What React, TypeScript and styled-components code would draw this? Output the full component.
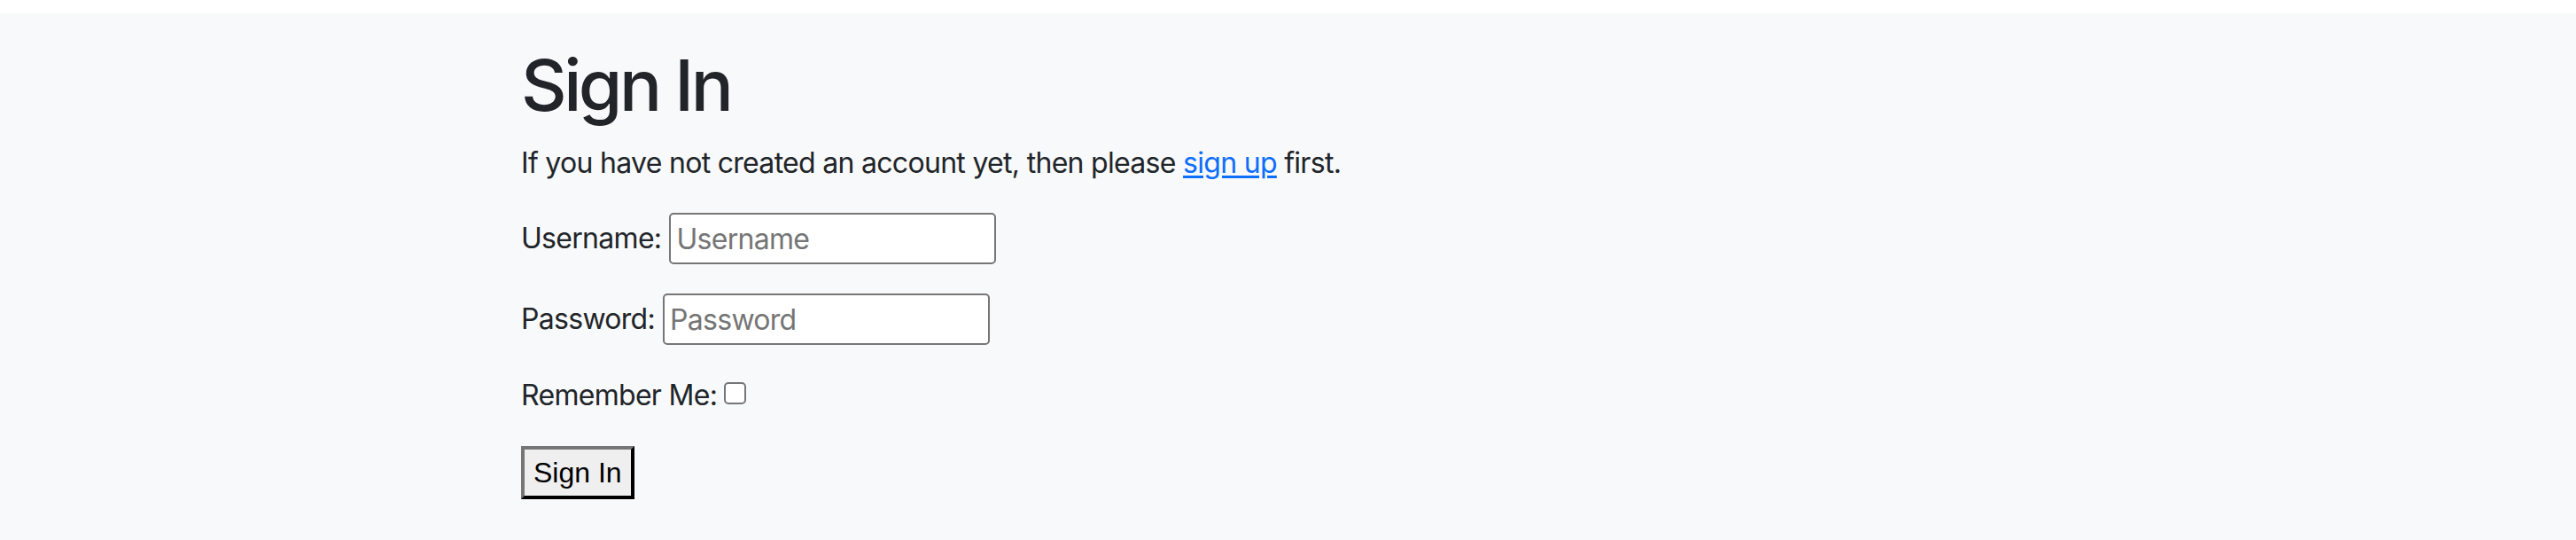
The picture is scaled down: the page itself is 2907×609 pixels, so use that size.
import React from "react";
import styled, { createGlobalStyle } from "styled-components";

const GlobalStyle = createGlobalStyle`
  html, body {
    margin: 0;
    padding: 0;
    background: #ffffff;
  }
`;

const Page = styled.main`
  margin-top: 15px;
  min-height: calc(100vh - 15px);
  background: #f8f9fa;
  color: #212529;
  font-family: Inter, "Noto Sans", sans-serif;
  font-size: 32px;
  line-height: 1.5;
  letter-spacing: -0.7px;
`;

const Container = styled.div`
  width: 1731px;
  margin: 0 auto;
  padding-top: 33px;
`;

const Title = styled.h1`
  margin: 0 0 16px;
  font-size: 80px;
  font-weight: 500;
  line-height: 1.2;
  letter-spacing: -3.5px;
`;

const Intro = styled.p`
  margin: 0 0 32px;
`;

const Link = styled.a`
  color: #0d6efd;
  text-decoration: underline;
  text-underline-offset: 3px;
`;

const Form = styled.form`
  display: flex;
  flex-direction: column;
  align-items: flex-start;
  gap: 33px;
`;

const Row = styled.div`
  display: flex;
  align-items: center;
  gap: 9px;
`;

const Label = styled.label`
  white-space: nowrap;
`;

const TextInput = styled.input`
  box-sizing: border-box;
  width: 369px;
  height: 58px;
  padding: 2px 6px;
  border: 2px solid #767676;
  border-radius: 5px;
  background: #ffffff;
  font-family: Inter, "Noto Sans", sans-serif;
  font-size: 32px;
  letter-spacing: -0.7px;
  color: #212529;

  &::placeholder {
    color: #757575;
  }
`;

const Check = styled.input.attrs({ type: "checkbox" })`
  appearance: none;
  box-sizing: border-box;
  width: 25px;
  height: 25px;
  margin: 0 0 0 -1px;
  border: 2px solid #767676;
  border-radius: 5px;
  background: #ffffff;
  transform: translateY(-3px);
`;

const SubmitButton = styled.button`
  padding: 2px 10px;
  border: 4px outset #767676;
  border-color: #767676 #222222 #222222 #767676;
  background: #efefef;
  color: #000000;
  font-family: "Liberation Sans", Arial, sans-serif;
  font-size: 32px;
  line-height: 48px;
`;

export default function App() {
  return (
    <>
      <GlobalStyle />
      <Page>
        <Container>
          <Title>Sign In</Title>
          <Intro>
            If you have not created an account yet, then please{" "}
            <Link href="#">sign up</Link> first.
          </Intro>
          <Form onSubmit={(e) => e.preventDefault()}>
            <Row>
              <Label htmlFor="username">Username:</Label>
              <TextInput id="username" type="text" placeholder="Username" />
            </Row>
            <Row>
              <Label htmlFor="password">Password:</Label>
              <TextInput id="password" type="password" placeholder="Password" />
            </Row>
            <Row>
              <Label htmlFor="remember">Remember Me:</Label>
              <Check id="remember" />
            </Row>
            <SubmitButton type="submit">Sign In</SubmitButton>
          </Form>
        </Container>
      </Page>
    </>
  );
}
